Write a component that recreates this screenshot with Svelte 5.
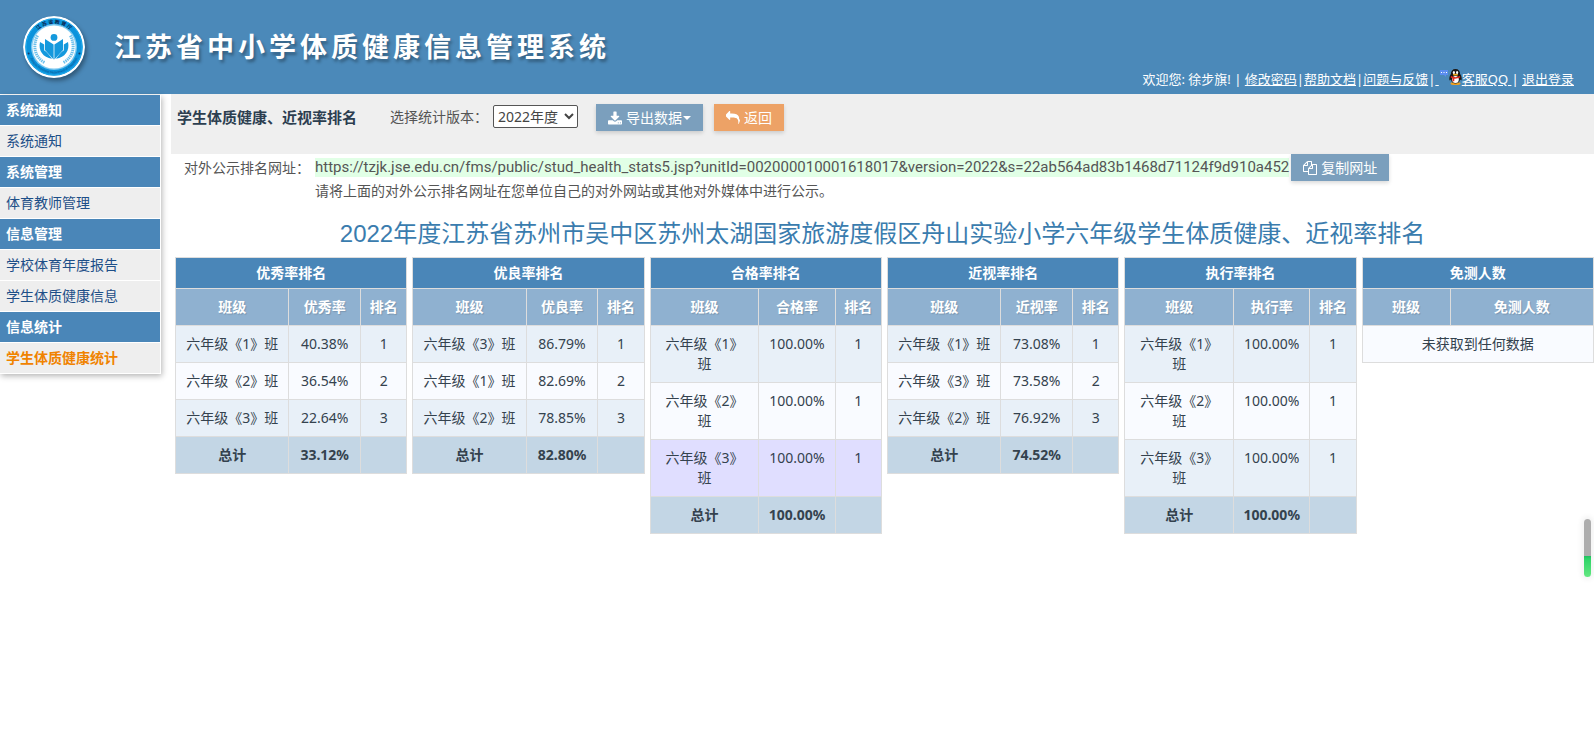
<script lang="ts">
  type Stat = { title: string; heads: string[]; cols: number[]; rows: string[][]; total?: string };

  const menu = [
    { name: '系统通知', items: ['系统通知'] },
    { name: '系统管理', items: ['体育教师管理'] },
    { name: '信息管理', items: ['学校体育年度报告', '学生体质健康信息'] },
    { name: '信息统计', items: ['学生体质健康统计'] },
  ];
  const current = '学生体质健康统计';

  const stats: Stat[] = [
    { title: '优秀率排名', heads: ['班级', '优秀率', '排名'], cols: [49, 31, 20], total: '33.12%',
      rows: [['六年级《1》班', '40.38%', '1'], ['六年级《2》班', '36.54%', '2'], ['六年级《3》班', '22.64%', '3']] },
    { title: '优良率排名', heads: ['班级', '优良率', '排名'], cols: [49, 31, 20], total: '82.80%',
      rows: [['六年级《3》班', '86.79%', '1'], ['六年级《1》班', '82.69%', '2'], ['六年级《2》班', '78.85%', '3']] },
    { title: '合格率排名', heads: ['班级', '合格率', '排名'], cols: [47, 33, 20], total: '100.00%',
      rows: [['六年级《1》班', '100.00%', '1'], ['六年级《2》班', '100.00%', '1'], ['六年级《3》班', '100.00%', '1']] },
    { title: '近视率排名', heads: ['班级', '近视率', '排名'], cols: [49, 31, 20], total: '74.52%',
      rows: [['六年级《1》班', '73.08%', '1'], ['六年级《3》班', '73.58%', '2'], ['六年级《2》班', '76.92%', '3']] },
    { title: '执行率排名', heads: ['班级', '执行率', '排名'], cols: [47, 33, 20], total: '100.00%',
      rows: [['六年级《1》班', '100.00%', '1'], ['六年级《2》班', '100.00%', '1'], ['六年级《3》班', '100.00%', '1']] },
    { title: '免测人数', heads: ['班级', '免测人数'], cols: [38, 62], rows: [] },
  ];

  const url = 'https://tzjk.jse.edu.cn/fms/public/stud_health_stats5.jsp?unitId=002000010001618017&version=2022&s=22ab564ad83b1468d71124f9d910a452';

  let version = $state('2022');
  // highlighted row, as "table-row"
  let hover = $state('2-2');
</script>

<header class="top">
  <div class="brand">
    <svg class="logo" viewBox="0 0 62 62" aria-hidden="true">
      <defs>
        <path id="arc-top" d="M7.6 31a23.4 23.4 0 0 1 46.8 0" />
        <path id="arc-bottom" d="M4.8 31a26.2 26.2 0 0 0 52.4 0" />
      </defs>
      <circle cx="31" cy="31" r="31" fill="#fff" />
      <circle cx="31" cy="31" r="28.8" fill="#0b93dc" />
      <circle cx="31" cy="31" r="28" fill="none" stroke="#22a9ea" stroke-width="1" />
      <circle cx="31" cy="31" r="23" fill="#7fc9f0" />
      <circle cx="31" cy="31" r="21.6" fill="#fff" />
      <text class="ring-cn"><textPath href="#arc-top" startOffset="50%">江 苏 省 教 育 厅</textPath></text>
      <text class="ring-en"><textPath href="#arc-bottom" startOffset="50%">Jiangsu Provincial Department of Education</textPath></text>
      <circle cx="5.6" cy="37.5" r="1" fill="#123a66" />
      <circle cx="56.4" cy="37.5" r="1" fill="#123a66" />
      <g fill="none" stroke="#6cc0ec" stroke-width="3" stroke-dasharray="1.4 .7">
        <path d="M14.5 19.5C9.5 30 11.5 41 21.5 46.5" />
        <path d="M47.5 19.5C52.5 30 50.5 41 40.5 46.5" />
      </g>
      <g fill="#1499dd">
        <circle cx="31" cy="21.4" r="3.4" />
        <path d="M30.6 43.5V28.4L22 23V34Z" />
        <path d="M31.4 43.5V28.4L40 23V34Z" />
        <path d="M17 26C15 34.5 20 41.5 29 42.8 25.5 38 24 36 21.2 34.5V28.5Z" />
        <path d="M45 26C47 34.5 42 41.5 33 42.8 36.5 38 38 36 40.8 34.5V28.5Z" />
      </g>
    </svg>
    <h1>江苏省中小学体质健康信息管理系统</h1>
  </div>
  <nav class="user">
    <span>欢迎您: 徐步旗! |&nbsp;</span><a href="#pwd">修改密码</a><span>|</span><a href="#help">帮助文档</a><span>|</span><a href="#faq">问题与反馈</a><span>|</span><a href="#qq">&nbsp;<svg class="qq" viewBox="0 0 23 16" aria-hidden="true">
      <path d="M1 1h8v5H7v2L5 6H1z" fill="#5b8df0" />
      <path d="M2 3h1v1H2zM4.5 3h1v1h-1zM7 3h1v1H7z" fill="#fff" />
      <ellipse cx="16.5" cy="14.5" rx="5" ry="1.5" fill="#f0a020" />
      <path d="M16.5 0c3 0 4.6 2 4.6 5 1.5 2 2 5 1.2 6.5l-1.3-1c-.4 2.500-2 4-4.500 4s-4.100-1.500-4.500-4l-1.300 1C9.900 10 10.400 7 11.900 5c0-3 1.600-5 4.600-5z" fill="#1b1715" />
      <ellipse cx="16.5" cy="10.6" rx="3.3" ry="3.5" fill="#fff" />
      <ellipse cx="14.9" cy="3.4" rx="1.1" ry="1.5" fill="#fff" />
      <ellipse cx="18.1" cy="3.4" rx="1.1" ry="1.5" fill="#fff" />
      <ellipse cx="16.5" cy="5.7" rx="2.6" ry=".9" fill="#f5b323" />
      <path d="M12 7c3 1.5 6 1.5 9 0l.3 1.600c-2 .9-4 1.200-6 1.100v2.500h-1.700V9.400c-.7-.2-1.300-.4-1.900-.8z" fill="#e02a1c" />
    </svg>客服QQ&nbsp;</a><span>|&nbsp;</span><a href="#logout">退出登录</a>
  </nav>
</header>

<div class="body">
  <aside>
    {#each menu as group}
      <h2>{group.name}</h2>
      {#each group.items as item}
        <a href="#menu" class:current={item === current}>{item}</a>
      {/each}
    {/each}
  </aside>

  <main>
    <div class="toolbar">
      <h2>学生体质健康、近视率排名</h2>
      <label for="version">选择统计版本：</label>
      <select id="version" bind:value={version}>
        <option value="2022">2022年度</option>
        <option value="2021">2021年度</option>
      </select>
      <button type="button" class="btn export">
        <svg class="icon" viewBox="0 0 1664 1536" aria-hidden="true"><path d="M1280 1344q0-26-19-45t-45-19-45 19-19 45 19 45 45 19 45-19 19-45zm256 0q0-26-19-45t-45-19-45 19-19 45 19 45 45 19 45-19 19-45zm128-224v320q0 40-28 68t-68 28h-1472q-40 0-68-28t-28-68v-320q0-40 28-68t68-28h465l135 136q58 56 136 56t136-56l136-136h464q40 0 68 28t28 68zm-325-569q17 41-14 70l-448 448q-18 19-45 19t-45-19l-448-448q-31-29-14-70 17-39 59-39h256v-448q0-26 19-45t45-19h256q26 0 45 19t19 45v448h256q42 0 59 39z" /></svg>
        <span>导出数据</span><i class="caret"></i>
      </button>
      <button type="button" class="btn back">
        <svg class="icon" viewBox="0 0 1792 1792" aria-hidden="true"><path d="M1792 1120q0 166-127 451-3 7-10.5 24t-13.5 30-13 22q-12 17-28 17-15 0-23.5-10t-8.5-25q0-9 2.5-26.5t2.5-23.5q5-68 5-123 0-112-19.5-200.5t-54-153.5-89-112-120-79-152-51-178.5-25-206-8h-224v256q0 26-19 45t-45 19-45-19l-512-512q-19-19-19-45t19-45l512-512q19-19 45-19t45 19 19 45v256h224q713 0 875 403 53 134 53 333z" /></svg>
        <span>返回</span>
      </button>
    </div>

    <div class="public">
      <span>对外公示排名网址：</span>
      <div>
        <div class="line">
          <span class="url">{url}</span>
          <button type="button" class="btn">
            <svg class="icon" viewBox="0 0 1792 1792" aria-hidden="true"><path d="M1696 384q40 0 68 28t28 68v1216q0 40-28 68t-68 28h-960q-40 0-68-28t-28-68v-288h-544q-40 0-68-28t-28-68v-672q0-40 20-88t48-76l408-408q28-28 76-48t88-20h416q40 0 68 28t28 68v328q68-40 128-40h416zm-544 213l-299 299h299v-299zm-640-384l-299 299h299v-299zm196 647l316-316v-416h-384v416q0 40-28 68t-68 28h-416v640h512v-256q0-40 20-88t48-76zm956 804v-1152h-384v416q0 40-28 68t-68 28h-416v640h896z" /></svg>
            <span>复制网址</span>
          </button>
        </div>
        <p>请将上面的对外公示排名网址在您单位自己的对外网站或其他对外媒体中进行公示。</p>
      </div>
    </div>

    <h3>2022年度江苏省苏州市吴中区苏州太湖国家旅游度假区舟山实验小学六年级学生体质健康、近视率排名</h3>

    <div class="stats">
      {#each stats as s, t}
        <table>
          <colgroup>
            {#each s.cols as w}<col style="width: {w}%" />{/each}
          </colgroup>
          <thead>
            <tr class="title"><th colspan={s.heads.length}>{s.title}</th></tr>
            <tr class="heads">
              {#each s.heads as h}<th>{h}</th>{/each}
            </tr>
          </thead>
          <tbody>
            {#each s.rows as row, r}
              <tr class:odd={r % 2 === 0} class:hover={hover === `${t}-${r}`} onmouseenter={() => (hover = `${t}-${r}`)}>
                {#each row as cell}<td>{cell}</td>{/each}
              </tr>
            {:else}
              <tr><td colspan={s.heads.length}>未获取到任何数据</td></tr>
            {/each}
          </tbody>
          {#if s.total}
            <tfoot>
              <tr><td>总计</td><td>{s.total}</td><td></td></tr>
            </tfoot>
          {/if}
        </table>
      {/each}
    </div>
  </main>
</div>

<div class="gauge"></div>

<style>
  :global(body) { margin: 0; background: #fff; color: #555; font: 14px/20px "Noto Sans", "Noto Sans CJK SC", sans-serif; }
  h1, h2, h3, p { margin: 0; }

  .top { display: flex; justify-content: space-between; height: 94px; background: #4b89b9; color: #fff; }
  .brand { display: flex; align-items: center; gap: 29px; padding-left: 23px; }
  .logo { width: 62px; height: 62px; border-radius: 50%; box-shadow: 2px 3px 4px rgba(0, 0, 0, .35); }
  .ring-cn { font: bold 5px "Noto Sans CJK SC", sans-serif; fill: #0d2c55; text-anchor: middle; }
  .ring-en { font: 3px "Liberation Sans", sans-serif; fill: #0d4a86; text-anchor: middle; }
  h1 { font-size: 27px; line-height: 36px; font-weight: bold; letter-spacing: 4px; text-shadow: 2px 3px 3px rgba(0, 0, 0, .3); }
  .user { align-self: flex-end; padding: 0 20px 5px 0; font-size: 13px; white-space: nowrap; }
  .user a { color: #fff; text-decoration: underline; }
  .qq { width: 23px; height: 16px; vertical-align: -1px; }

  .body { display: flex; align-items: flex-start; gap: 10px; }
  aside { width: 160px; flex: none; margin-top: 1px; border-right: 1px solid #fff; box-shadow: 1px 2px 6px rgba(0, 0, 0, .3); }
  aside h2, aside a { display: block; height: 30px; padding-left: 6px; border-bottom: 1px solid #fff; font-size: 14px; line-height: 30px; }
  aside h2 { background: #4a86b8; color: #fff; font-weight: bold; }
  aside a { background: #eee; color: #1d4f88; text-decoration: none; }
  aside a.current { color: #f08300; font-weight: bold; }

  main { flex: 1; min-width: 0; }
  .toolbar { display: flex; align-items: flex-start; height: 50px; padding: 10px 6px 0; background: #efefef; }
  .toolbar h2 { margin-right: 33px; color: #2c3e50; font-size: 15px; line-height: 26px; }
  .toolbar label { line-height: 26px; }
  select { width: 85px; height: 23px; margin: 1px 18px 0 5px; padding: 0; border: 1px solid #555; border-radius: 2px; background: #fff; color: #444; font: inherit; }
  .btn { display: inline-flex; align-items: center; gap: 4px; height: 27px; padding: 0 12px; border: 0; background: #7b9fbd; color: #fff; font: inherit; box-shadow: 0 2px 4px rgba(0, 0, 0, .15); cursor: pointer; }
  .btn.export { margin-right: 11px; }
  .btn.back { background: #eda266; }
  .icon { width: 14px; height: 14px; fill: currentColor; }
  .caret { margin-left: -3px; border: 4px solid transparent; border-top-color: currentColor; border-bottom: 0; }

  .public { display: flex; gap: 5px; padding-left: 13px; line-height: 27px; white-space: nowrap; }
  .line { display: flex; align-items: center; gap: 2px; }
  .url { background: #e1ffe6; font-family: Roboto, sans-serif; font-size: 15px; line-height: 19px; }
  .public p { line-height: 20px; }

  h3 { margin-top: 18px; color: #3a7cae; font: 24px/30px "Liberation Sans", "Noto Sans CJK SC", sans-serif; text-align: center; }

  .stats { display: grid; grid-template-columns: repeat(6, 1fr); gap: 5px; align-items: start; padding: 8px 0 0 4px; }
  table { width: 100%; border-collapse: collapse; table-layout: fixed; color: #34424e; text-align: center; }
  th, td { padding: 8px 9px; border: 1px solid #ddd; vertical-align: top; }
  .title th { padding: 5px; background: #4a86b8; color: #fff; }
  .heads th { padding: 8px 4px; background: #8fb1d0; color: #fff; text-shadow: 1px 1px 1px rgba(0, 0, 0, .15); }
  tbody tr { background: #f9fbff; }
  tbody tr.odd { background: #e8f0f8; }
  tbody tr.hover { background: #e0deff; }
  tfoot tr { background: #c3d6e5; font-weight: bold; }

  /* floating memory gauge */
  .gauge { position: fixed; right: 3px; bottom: 179px; width: 7px; height: 58px; border-radius: 4px; background: linear-gradient(#adadad 37px, #1fbf5f 37px, #2fd468 40px, #63e780); box-shadow: 0 0 5px 3px rgba(0, 0, 0, .05); }
</style>
